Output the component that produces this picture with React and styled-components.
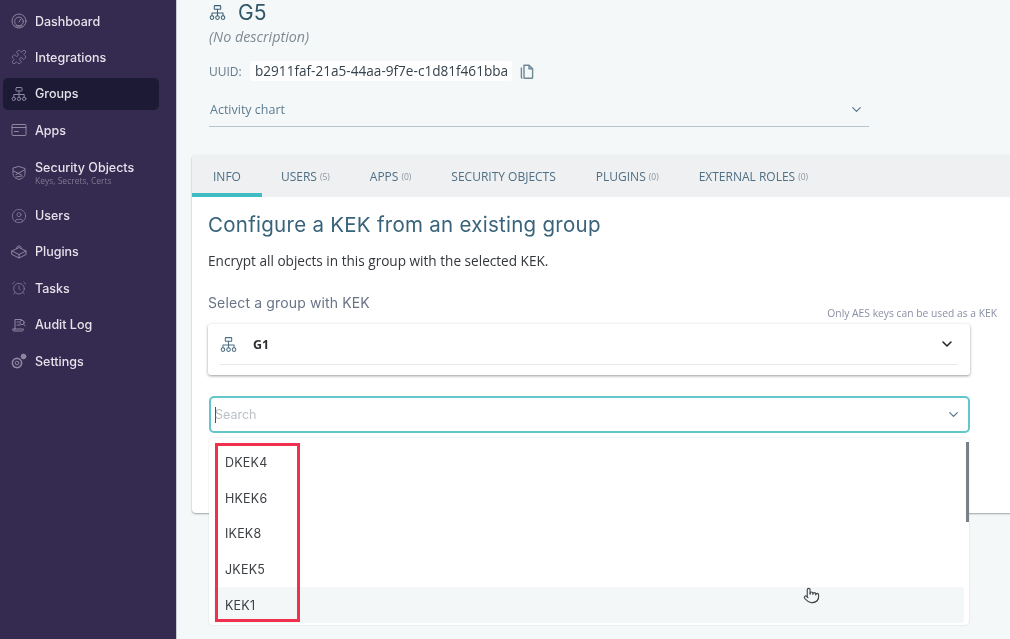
import React from "react";
import styled, { createGlobalStyle } from "styled-components";
import { ChevronDown, Puzzle, CircleUser, AlarmClock, Pointer } from "lucide-react";

const Global = createGlobalStyle`
  html, body { margin: 0; padding: 0; height: 100%; overflow: hidden; background: #f5f8f9; }
  * { box-sizing: border-box; }
`;

const Shell = styled.div`
  display: flex;
  width: 1010px;
  height: 639px;
  overflow: hidden;
  background: #f5f8f9;
  filter: blur(0.35px);
`;

const Sidebar = styled.aside`
  width: 177px;
  flex: none;
  background: #352a50;
  border-right: 1px solid #c9cbd2;
  padding: 5px 0 0 3px;
  display: flex;
  flex-direction: column;
  gap: 4.4px;
`;

const NavItem = styled.div`
  width: 156px;
  height: ${(p) => (p.$tall ? "44.6px" : "32px")};
  border-radius: 5px;
  background: ${(p) => (p.$active ? "#1d1a35" : "transparent")};
  display: flex;
  align-items: center;
  padding-left: 8px;
  gap: 8px;
  color: #8d87a0;
`;

const NavIconSlot = styled.span`
  width: 16px;
  height: 16px;
  flex: none;
  display: flex;
  align-items: center;
  justify-content: center;
`;

const NavText = styled.div`
  display: flex;
  flex-direction: column;
  font-family: Inter, "Liberation Sans", sans-serif;
`;

const NavLabel = styled.span`
  font-size: 12.5px;
  font-weight: 500;
  line-height: 15px;
  color: #e4e2ea;
`;

const NavSub = styled.span`
  font-family: "Open Sans", sans-serif;
  font-size: 8.5px;
  line-height: 11px;
  color: #7f7a92;
`;

const Main = styled.main`
  flex: 1;
  min-width: 0;
  padding-left: 15px;
  display: flex;
  flex-direction: column;
`;

const Head = styled.section`
  height: 155px;
  padding-left: 17px;
  display: flex;
  flex-direction: column;
`;

const TitleRow = styled.div`
  height: 25px;
  display: flex;
  align-items: center;
  gap: 12px;
  color: #3b6075;
`;

const GroupName = styled.h1`
  margin: 0;
  font-family: Inter, sans-serif;
  font-size: 21px;
  font-weight: 400;
  color: #2f5669;
`;

const Description = styled.div`
  margin-top: 3px;
  height: 18px;
  font-family: "Open Sans", sans-serif;
  font-style: italic;
  font-size: 14.3px;
  line-height: 18px;
  color: #7e8a94;
`;

const UuidRow = styled.div`
  margin-top: 15px;
  height: 20px;
  display: flex;
  align-items: center;
  color: #5f7b8d;
`;

const UuidLabel = styled.span`
  width: 41px;
  font-family: "Open Sans", sans-serif;
  font-size: 12px;
  color: #62798b;
`;

const UuidValue = styled.span`
  width: 262px;
  height: 20px;
  padding-left: 5px;
  background: #fff;
  border-radius: 3px;
  font-family: "Open Sans", sans-serif;
  font-size: 13.6px;
  line-height: 20px;
  white-space: nowrap;
  color: #36424c;
`;

const CopyBtn = styled.span`
  margin-left: 8px;
  display: flex;
  color: #6f8695;
`;

const Accordion = styled.div`
  margin-top: 19px;
  width: 660px;
  height: 27px;
  padding: 0 5px 8px 1px;
  border-bottom: 1px solid #b4c6d2;
  display: flex;
  align-items: center;
  justify-content: space-between;
  font-family: "Open Sans", sans-serif;
  font-size: 12.5px;
  color: #5d7c90;
`;

const Card = styled.section`
  position: relative;
  height: 358px;
  margin-right: -2px;
  background: #fff;
  border-radius: 4px 0 0 4px;
  box-shadow: 0 1px 2px rgba(0, 0, 0, 0.35);
`;

const Tabs = styled.nav`
  height: 42px;
  background: #eef0f1;
  display: flex;
  border-radius: 4px 0 0 0;
`;

const Tab = styled.div`
  padding: 4px 21px 0 19px;
  height: 42px;
  display: flex;
  align-items: center;
  gap: 3px;
  font-family: "Open Sans", sans-serif;
  font-size: 12px;
  font-weight: 500;
  color: #4f6f85;
  border-bottom: 4px solid ${(p) => (p.$active ? "#41bcc4" : "transparent")};
  white-space: nowrap;
  &:first-child {
    padding-left: 21px;
  }
`;

const TabCount = styled.span`
  font-size: 8.5px;
  font-weight: 400;
  color: #8c95a0;
`;

const Body = styled.div`
  padding: 15px 40px 0 16px;
`;

const Heading = styled.h2`
  margin: 0;
  font-family: Inter, sans-serif;
  font-size: 20.5px;
  font-weight: 400;
  letter-spacing: 0.27px;
  line-height: 26px;
  color: #38637a;
  white-space: nowrap;
`;

const Lead = styled.p`
  margin: 14px 0 0;
  font-family: "Open Sans", sans-serif;
  font-size: 13.6px;
  font-weight: 500;
  line-height: 18px;
  color: #33363b;
`;

const FieldLabel = styled.div`
  margin-top: 23px;
  font-family: Inter, sans-serif;
  font-size: 14px;
  letter-spacing: 0.14px;
  line-height: 20px;
  color: #697488;
`;

const Hint = styled.div`
  margin: -7px -25px 0 0;
  text-align: right;
  font-family: "Open Sans", sans-serif;
  font-size: 10.3px;
  line-height: 14px;
  color: #8a8fa4;
`;

const GroupSelect = styled.div`
  margin-top: 4px;
  width: 762px;
  height: 51px;
  padding: 0 12px;
  background: #fff;
  border-radius: 3px;
  box-shadow: 0 1px 3px rgba(0, 0, 0, 0.4);
`;

const GroupSelectRow = styled.div`
  height: 41px;
  border-bottom: 1px solid #e6e8ea;
  display: flex;
  align-items: center;
  gap: 16px;
  padding-right: 3px;
  color: #4d6f84;
`;

const GroupSelectName = styled.span`
  flex: 1;
  font-family: "Open Sans", sans-serif;
  font-size: 12.5px;
  font-weight: 700;
  color: #2d2f33;
`;

const ComboWrap = styled.div`
  position: relative;
  margin: 21px 0 0 1px;
  width: 761px;
`;

const Search = styled.div`
  height: 37px;
  border: 2px solid #62c6ca;
  border-radius: 5px;
  padding: 0 7px 0 4px;
  display: flex;
  align-items: center;
  background: #fff;
  color: #5c788a;
`;

const Caret = styled.span`
  width: 1px;
  height: 16px;
  background: #4a5262;
`;

const Placeholder = styled.span`
  flex: 1;
  margin-left: -1px;
  font-family: Inter, sans-serif;
  font-size: 12.5px;
  color: #bcc0c5;
`;

const Menu = styled.div`
  position: absolute;
  left: 0;
  top: 42px;
  width: 760px;
  height: 187px;
  background: #fff;
  border-radius: 4px;
  box-shadow: 0 0 2px rgba(0, 0, 0, 0.14);
  padding: 7px 5px 0;
  display: flex;
  flex-direction: column;
`;

const Option = styled.div`
  height: 35.6px;
  flex: none;
  padding: 0 11px;
  display: flex;
  align-items: center;
  border-radius: 3px;
  font-family: Inter, sans-serif;
  font-size: 12.5px;
  letter-spacing: 0.2px;
  color: #3e4146;
  background: ${(p) => (p.$hover ? "#f4f7f8" : "transparent")};
`;

const Scrollbar = styled.div`
  position: absolute;
  right: 0;
  top: 4px;
  width: 3.5px;
  height: 80px;
  background: #7b7f86;
`;

const Annotation = styled.div`
  position: absolute;
  left: 6px;
  top: 5px;
  width: 85px;
  height: 179px;
  border: 3px solid #f0304c;
  pointer-events: none;
`;

const Cursor = styled.span`
  position: absolute;
  left: 594px;
  top: 149px;
  display: flex;
  color: #44474c;
`;

const IconProps = { size: 16, strokeWidth: 1.1 };

const Svg = ({ children, size = 16 }) => (
  <svg width={size} height={size} viewBox="0 0 16 16" fill="none" stroke="currentColor" strokeWidth="1" strokeLinecap="round" strokeLinejoin="round">
    {children}
  </svg>
);

const GroupIcon = ({ size = 16 }) => (
  <Svg size={size}>
    <rect x="5" y="1.5" width="6" height="3.5" rx="0.6" />
    <path d="M8 5v3.5M2.8 11V8.5h10.4V11M8 8.5V11" />
    <circle cx="2.8" cy="12.8" r="1.7" />
    <circle cx="8" cy="12.8" r="1.7" />
    <circle cx="13.2" cy="12.8" r="1.7" />
  </Svg>
);
const DashIcon = () => (
  <Svg>
    <circle cx="8" cy="8" r="7" />
    <circle cx="8" cy="8.5" r="4.4" />
    <path d="M8 9l2-3M5 13h6" />
  </Svg>
);
const AppsIcon = () => (
  <Svg>
    <rect x="1" y="2.5" width="14" height="11" rx="1" />
    <path d="M1 5.5h14M3.5 9.5h4" />
  </Svg>
);
const ShieldIcon = () => (
  <Svg>
    <path d="M8 1.5l6 2v5c0 3-2.5 5-6 6-3.5-1-6-3-6-6v-5z" />
    <path d="M2.5 6l8 4M13.5 5L5 9.5M5 12l6-1" />
  </Svg>
);
const PluginIcon = () => (
  <Svg>
    <path d="M1 7l7-3.5L15 7v3.5L8 14l-7-3.5z" />
    <path d="M1 7l7 3.5L15 7M8 10.5V14" />
    <path d="M5.5 4.5C5.5 2.5 7 2 8 2s2.5.5 2.5 2.5" />
  </Svg>
);
const AuditIcon = () => (
  <Svg>
    <path d="M4 12V2.5h6.5M4 12H1.5c0 1.5.8 2 1.5 2h8c1 0 1.5-.8 1.5-2H4z" />
    <circle cx="11" cy="5.5" r="2.2" />
    <path d="M12.6 7.2l1.6 1.6M6 5h1.5M6 8h3" />
  </Svg>
);
const SettingsIcon = () => (
  <Svg>
    <circle cx="6" cy="10" r="1.8" />
    <circle cx="6" cy="10" r="4.6" strokeDasharray="2 1" strokeWidth="1.6" />
    <circle cx="12.5" cy="3.5" r="2.4" fill="currentColor" />
  </Svg>
);
const CopyIcon = () => (
  <svg width="14" height="15" viewBox="0 0 14 15" fill="none" stroke="currentColor" strokeWidth="1.4" strokeLinejoin="round">
    <path d="M4 1.2h5l3.6 3.6v8.6a.8.8 0 0 1-.8.8H4.8a.8.8 0 0 1-.8-.8z" />
    <path d="M9 1.2v3.6h3.6" />
    <path d="M1.4 3.5v9.8a1 1 0 0 0 1 1" />
  </svg>
);

const nav = [
  { label: "Dashboard", icon: <DashIcon /> },
  { label: "Integrations", icon: <Puzzle {...IconProps} /> },
  { label: "Groups", icon: <GroupIcon />, active: true },
  { label: "Apps", icon: <AppsIcon /> },
  { label: "Security Objects", sub: "Keys, Secrets, Certs", icon: <ShieldIcon /> },
  { label: "Users", icon: <CircleUser {...IconProps} /> },
  { label: "Plugins", icon: <PluginIcon /> },
  { label: "Tasks", icon: <AlarmClock {...IconProps} /> },
  { label: "Audit Log", icon: <AuditIcon /> },
  { label: "Settings", icon: <SettingsIcon /> },
];

const tabs = [
  { label: "INFO", active: true },
  { label: "USERS", count: 5 },
  { label: "APPS", count: 0 },
  { label: "SECURITY OBJECTS" },
  { label: "PLUGINS", count: 0 },
  { label: "EXTERNAL ROLES", count: 0 },
];

const options = ["DKEK4", "HKEK6", "IKEK8", "JKEK5", "KEK1"];

export default function App() {
  return (
    <Shell>
      <Global />
      <Sidebar>
        {nav.map((n) => (
          <NavItem key={n.label} $active={n.active} $tall={!!n.sub}>
            <NavIconSlot>{n.icon}</NavIconSlot>
            <NavText>
              <NavLabel>{n.label}</NavLabel>
              {n.sub && <NavSub>{n.sub}</NavSub>}
            </NavText>
          </NavItem>
        ))}
      </Sidebar>
      <Main>
        <Head>
          <TitleRow>
            <GroupIcon size={17} />
            <GroupName>G5</GroupName>
          </TitleRow>
          <Description>(No description)</Description>
          <UuidRow>
            <UuidLabel>UUID:</UuidLabel>
            <UuidValue>b2911faf-21a5-44aa-9f7e-c1d81f461bba</UuidValue>
            <CopyBtn><CopyIcon /></CopyBtn>
          </UuidRow>
          <Accordion>
            <span>Activity chart</span>
            <ChevronDown size={15} strokeWidth={2} />
          </Accordion>
        </Head>
        <Card>
          <Tabs>
            {tabs.map((t) => (
              <Tab key={t.label} $active={t.active}>
                {t.label}
                {t.count !== undefined && <TabCount>({t.count})</TabCount>}
              </Tab>
            ))}
          </Tabs>
          <Body>
            <Heading>Configure a KEK from an existing group</Heading>
            <Lead>Encrypt all objects in this group with the selected KEK.</Lead>
            <FieldLabel>Select a group with KEK</FieldLabel>
            <Hint>Only AES keys can be used as a KEK</Hint>
            <GroupSelect>
              <GroupSelectRow>
                <GroupIcon size={17} />
                <GroupSelectName>G1</GroupSelectName>
                <ChevronDown size={16} strokeWidth={2.4} color="#26282c" />
              </GroupSelectRow>
            </GroupSelect>
            <ComboWrap>
              <Search>
                <Caret />
                <Placeholder>Search</Placeholder>
                <ChevronDown size={15} strokeWidth={2} />
              </Search>
              <Menu>
                {options.map((o) => (
                  <Option key={o} $hover={o === "KEK1"}>{o}</Option>
                ))}
                <Scrollbar />
                <Annotation />
                <Cursor><Pointer size={17} strokeWidth={1.6} /></Cursor>
              </Menu>
            </ComboWrap>
          </Body>
        </Card>
      </Main>
    </Shell>
  );
}
